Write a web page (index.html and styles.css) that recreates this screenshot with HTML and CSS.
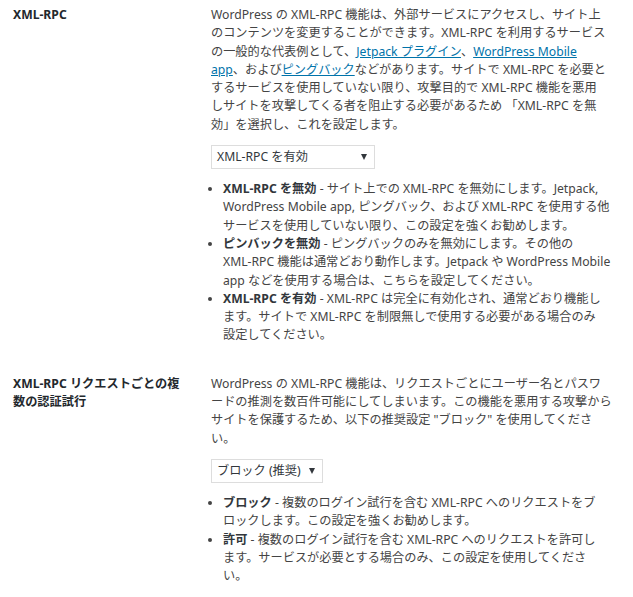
FILE: index.html
```html
<!DOCTYPE html>
<html lang="ja">
<head>
<meta charset="utf-8">
<title>XML-RPC</title>
<link rel="stylesheet" href="styles.css">
</head>
<body>
<div class="settings">
  <div class="row">
    <div class="label">XML-RPC</div>
    <div class="field">
      <p class="desc">WordPress の XML-RPC 機能は、外部サービスにアクセスし、サイト上<br>のコンテンツを変更することができます。XML-RPC を利用するサービス<br>の一般的な代表例として、<a href="#">Jetpack プラグイン</a>、<a href="#">WordPress Mobile<br>app</a>、および<a href="#">ピングバック</a>などがあります。サイトで XML-RPC を必要と<br>するサービスを使用していない限り、攻撃目的で XML-RPC 機能を悪用<br>しサイトを攻撃してくる者を阻止する必要があるため 「XML-RPC を無<br>効」を選択し、これを設定します。</p>
      <div class="select select-wide"><span>XML-RPC を有効</span><span class="arrow"></span></div>
      <ul class="options">
        <li><strong>XML-RPC を無効</strong> - サイト上での XML-RPC を無効にします。Jetpack,<br>WordPress Mobile app, ピングバック、および XML-RPC を使用する他<br>サービスを使用していない限り、この設定を強くお勧めします。</li>
        <li><strong>ピンバックを無効</strong> - ピングバックのみを無効にします。その他の<br>XML-RPC 機能は通常どおり動作します。Jetpack や WordPress Mobile<br>app などを使用する場合は、こちらを設定してください。</li>
        <li><strong>XML-RPC を有効</strong> - XML-RPC は完全に有効化され、通常どおり機能し<br>ます。サイトで XML-RPC を制限無しで使用する必要がある場合のみ<br>設定してください。</li>
      </ul>
    </div>
  </div>
  <div class="row">
    <div class="label">XML-RPC リクエストごとの複<br>数の認証試行</div>
    <div class="field">
      <p class="desc">WordPress の XML-RPC 機能は、リクエストごとにユーザー名とパスワ<br>ードの推測を数百件可能にしてしまいます。この機能を悪用する攻撃から<br>サイトを保護するため、以下の推奨設定 "ブロック" を使用してくださ<br>い。</p>
      <div class="select select-narrow"><span>ブロック (推奨)</span><span class="arrow"></span></div>
      <ul class="options">
        <li><strong>ブロック</strong> - 複数のログイン試行を含む XML-RPC へのリクエストをブ<br>ロックします。この設定を強くお勧めします。</li>
        <li><strong>許可</strong> - 複数のログイン試行を含む XML-RPC へのリクエストを許可し<br>ます。サービスが必要とする場合のみ、この設定を使用してくださ<br>い。</li>
      </ul>
    </div>
  </div>
</div>
</body>
</html>
```
FILE: styles.css
```css
html, body {
  margin: 0;
  padding: 0;
  background: #ffffff;
}
body {
  font-family: "Noto Sans", "Noto Sans CJK JP", sans-serif;
  font-size: 12.2px;
  line-height: 18.3px;
  color: #444444;
  text-spacing-trim: space-all;
}
.settings {
  padding: 6px 0 0 13px;
  display: flex;
  flex-direction: column;
  gap: 30px;
}
.row {
  display: flex;
}
.label {
  width: 186px;
  flex: none;
  margin-right: 12px;
  font-weight: bold;
  color: #23282d;
  white-space: nowrap;
}
.field {
  width: 420px;
  flex: none;
}
.desc {
  margin: 0;
  white-space: nowrap;
}
.desc a {
  color: #0073aa;
  text-decoration: underline;
}
.select {
  margin: 11px 0;
  height: 24px;
  box-sizing: border-box;
  border: 1px solid #dddddd;
  background: #ffffff;
  display: flex;
  align-items: center;
  justify-content: space-between;
  padding: 0 7px 0 5px;
  color: #32373c;
}
.select-wide { width: 164px; }
.select-narrow { width: 112px; }
.arrow {
  width: 0;
  height: 0;
  border-left: 3.5px solid transparent;
  border-right: 3.5px solid transparent;
  border-top: 6px solid #32373c;
}
.options {
  margin: 0;
  padding-left: 12px;
  list-style: disc;
}
.options li {
  margin: 0;
  white-space: nowrap;
}
.options li::marker {
  color: #444444;
}
.options strong {
  color: #32373c;
}
```
